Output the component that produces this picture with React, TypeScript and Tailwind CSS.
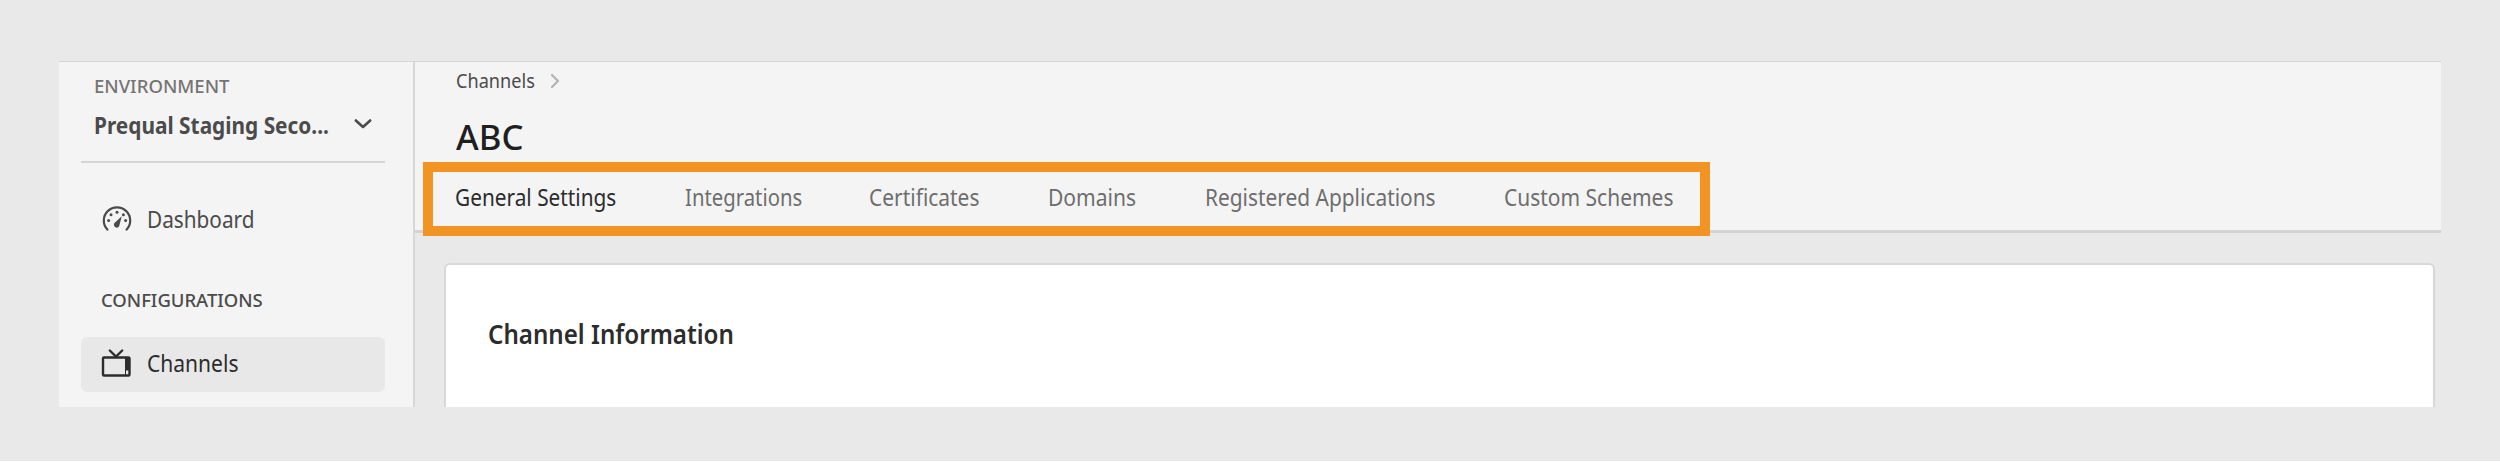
const tabs = [
  { label: "General Settings", box: "w-[230px]", scale: "scale-x-[0.905] text-[#2c2c2c]" },
  { label: "Integrations", box: "w-[184px]", scale: "scale-x-[0.883] text-[#6e6e6e]" },
  { label: "Certificates", box: "w-[179px]", scale: "scale-x-[0.91] text-[#6e6e6e]" },
  { label: "Domains", box: "w-[157px]", scale: "scale-x-[0.915] text-[#6e6e6e]" },
  { label: "Registered Applications", box: "w-[299px]", scale: "scale-x-[0.908] text-[#6e6e6e]" },
  { label: "Custom Schemes", box: "w-[192px]", scale: "scale-x-[0.912] text-[#6e6e6e]" },
];

function GaugeIcon() {
  return (
    <svg width="30" height="30" viewBox="0 0 30 30" fill="none" stroke="#4b4b4b" className="shrink-0">
      <path d="M5.4 23.6A13.2 13.2 0 1 1 24.6 23.6" strokeWidth="2.2" strokeLinecap="round" />
      <path d="M19.8 10.2L17.5 18.8A2.8 2.8 0 1 1 13 16.6Z" fill="#4b4b4b" stroke="none" />
      <g fill="#4b4b4b" stroke="none">
        <circle cx="6.6" cy="14.6" r="1.5" />
        <circle cx="9" cy="8.7" r="1.5" />
        <circle cx="15" cy="6.2" r="1.5" />
        <circle cx="21.4" cy="8.7" r="1.5" />
        <circle cx="23.6" cy="14.6" r="1.5" />
      </g>
    </svg>
  );
}

function TelevisionIcon() {
  return (
    <svg width="30" height="30" viewBox="0 0 30 30" fill="none" stroke="#2c2c2c" className="shrink-0">
      <path d="M8.8 2.5L15 8.5L21.2 2.5" strokeWidth="2.4" strokeLinecap="round" />
      <rect x="2" y="9.5" width="26.5" height="18" rx="1" strokeWidth="2.4" />
      <path d="M24.5 10V27" strokeWidth="1" />
      <path d="M24.5 10h4v12.5h-4z" fill="#2c2c2c" stroke="none" />
    </svg>
  );
}

export default function App() {
  return (
    <div className="h-[462px] w-[2500px] overflow-hidden border-b border-white bg-[#e9e9e9] pt-[61px] pl-[59px] font-['Noto_Sans','Open_Sans',sans-serif] whitespace-nowrap">
      <div className="flex h-[346px] w-[2382px] border-t border-[#d5d5d5]">
        <aside className="flex w-[356px] shrink-0 flex-col border-r-2 border-[#d7d7d7] bg-[#f4f4f4] px-[22px] pt-[14px]">
          <div className="flex h-[85px] flex-col pl-[13px]">
            <span className="origin-left scale-x-[1.03] text-[18px] leading-5 font-medium text-[#747474]">ENVIRONMENT</span>
            <div className="mt-[17px] flex h-6 items-center">
              <span className="w-[259px] origin-left scale-x-[0.906] text-[23px] leading-6 font-bold text-[#4b4b4b]">Prequal Staging Seco...</span>
              <svg width="20" height="14" viewBox="0 0 20 14" fill="none" stroke="#4b4b4b" strokeWidth="2.6" strokeLinecap="round" strokeLinejoin="round">
                <path d="M2.8 2.5L10 9L17.2 2.5" />
              </svg>
            </div>
          </div>
          <div className="h-[2px] w-[304px] shrink-0 bg-[#d5d5d5]" />
          <nav className="flex flex-col">
            <div className="mt-[43px] flex h-[30px] items-start pl-[21px]">
              <GaugeIcon />
              <span className="mt-px ml-[15px] origin-left scale-x-[0.903] text-[23px] leading-6 text-[#4b4b4b]">Dashboard</span>
            </div>
            <span className="mt-[54px] ml-5 origin-left scale-x-[1.025] text-[18px] leading-5 font-medium text-[#4b4b4b]">CONFIGURATIONS</span>
            <div className="mt-[27px] flex h-[55px] w-[304px] items-start rounded-md bg-[#e8e8e8] pt-[11px] pl-5">
              <TelevisionIcon />
              <span className="mt-[3px] ml-4 origin-left scale-x-[0.915] text-[23px] leading-6 text-[#2c2c2c]">Channels</span>
            </div>
          </nav>
        </aside>
        <main className="flex grow flex-col">
          <header className="flex h-[171px] shrink-0 flex-col border-b-[3px] border-[#d3d3d3] bg-[#f4f4f4] pt-[7px]">
            <div className="ml-[41px] flex h-6 items-center">
              <span className="w-[93px] origin-left scale-x-[0.93] text-[19.5px] leading-6 text-[#4b4b4b]">Channels</span>
              <svg width="12" height="18" viewBox="0 0 12 18" fill="none" stroke="#b3b3b3" strokeWidth="2.2" strokeLinecap="round" strokeLinejoin="round">
                <path d="M3 3L9 9L3 15" />
              </svg>
            </div>
            <h1 className="mt-[24px] ml-[41px] origin-left scale-x-[1.02] text-[34px] leading-10 font-medium text-[#1f1f1f]">ABC</h1>
            <div className="relative mt-[5px] ml-2 flex h-[74px] w-[1287px] shrink-0 border-[10px] border-[#f29423] pt-[13px] pl-[22px]">
              {tabs.map((tab) => (
                <div key={tab.label} className={tab.box}>
                  <span className={"block origin-left text-[23px] leading-6 " + tab.scale}>{tab.label}</span>
                </div>
              ))}
            </div>
          </header>
          <section className="mt-[30px] mr-[6px] ml-[29px] grow rounded-t-md border-x-2 border-t-2 border-[#d8d8d8] bg-white pt-[53px] pl-[42px]">
            <h2 className="origin-left scale-x-[0.911] text-[26.5px] leading-8 font-semibold text-[#2c2c2c]">Channel Information</h2>
          </section>
        </main>
      </div>
    </div>
  );
}
